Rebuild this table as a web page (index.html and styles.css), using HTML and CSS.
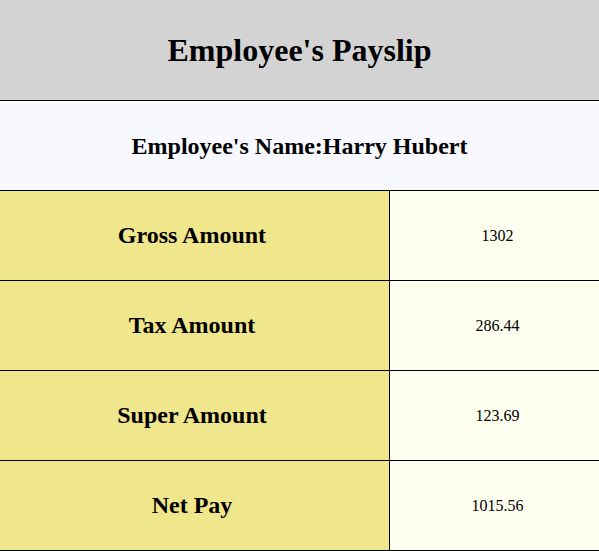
FILE: index.html
```html
<!DOCTYPE html>
<html>
<head>
<meta charset="utf-8">
<link rel="stylesheet" href="styles.css">
</head>
<body>
<div class="payslip">
  <div class="title-row"><h1 class="title">Employee's Payslip</h1></div>
  <div class="name-row"><h2 class="name">Employee's Name:Harry Hubert</h2></div>
  <div class="grid">
    <div class="label">Gross Amount</div><div class="value">1302</div>
    <div class="label">Tax Amount</div><div class="value">286.44</div>
    <div class="label">Super Amount</div><div class="value">123.69</div>
    <div class="label">Net Pay</div><div class="value">1015.56</div>
  </div>
</div>
</body>
</html>
```
FILE: styles.css
```css
html, body {
  margin: 0;
  padding: 0;
  overflow: hidden;
}
body {
  font-family: "Liberation Serif", "Times New Roman", serif;
  color: #000;
  background: #fff;
}
.payslip {
  width: 599px;
}
.title-row {
  height: 100px;
  background: #d3d3d3;
  border-bottom: 1px solid #000;
  display: flex;
  align-items: center;
  justify-content: center;
}
.title {
  margin: 0;
  font-size: 32px;
  font-weight: bold;
}
.name-row {
  height: 89px;
  background: #f8f8ff;
  border-bottom: 1px solid #000;
  display: flex;
  align-items: center;
  justify-content: center;
  padding-top: 1px;
  box-sizing: border-box;
  height: 90px;
}
.name {
  margin: 0;
  font-size: 24px;
  font-weight: bold;
}
.grid {
  display: grid;
  grid-template-columns: 390px 1fr;
  grid-auto-rows: 90px;
}
.label, .value {
  display: flex;
  align-items: center;
  justify-content: center;
  border-bottom: 1px solid #000;
  box-sizing: border-box;
}
.label {
  background: #f0e68c;
  border-right: 1px solid #000;
  font-size: 24px;
  font-weight: bold;
  padding-right: 5px;
}
.value {
  background: #fffff0;
  font-size: 16px;
  padding-left: 6px;
}
```
